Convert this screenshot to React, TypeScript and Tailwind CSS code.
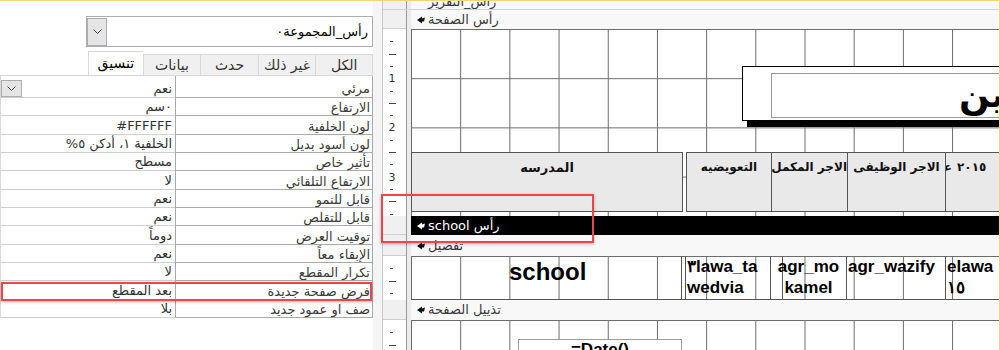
import clsx from 'clsx';

const PROPS: [string, string][] = [
  ['مرئي', 'نعم'],
  ['الارتفاع', '٠سم'],
  ['لون الخلفية', '#FFFFFF'],
  ['لون أسود بديل', 'الخلفية ١، أدكن ٥%'],
  ['تأثير خاص', 'مسطح'],
  ['الارتفاع التلقائي', 'لا'],
  ['قابل للنمو', 'نعم'],
  ['قابل للتقلص', 'نعم'],
  ['توقيت العرض', 'دوماً'],
  ['الإبقاء معاً', 'نعم'],
  ['تكرار المقطع', 'لا'],
  ['فرض صفحة جديدة', 'بعد المقطع'],
  ['صف او عمود جديد', 'بلا'],
];

const TABS = ['الكل', 'غير ذلك', 'حدث', 'بيانات', 'تنسيق'];

function Chevron() {
  return (
    <svg width="9" height="5" viewBox="0 0 9 5">
      <path d="M0.5 0.5 L4.5 4.5 L8.5 0.5" fill="none" stroke="#444" strokeWidth="1" />
    </svg>
  );
}

function SectionArrow({ color }: { color: string }) {
  return (
    <svg width="8" height="8" viewBox="0 0 8 8">
      <path d="M0 4 L5 0.5 L5 2.5 L8 1.5 L7 5.5 L5 5.5 L5 7.5 Z" fill={color} />
    </svg>
  );
}

// ruler ticks every quarter of a centimetre (49.2px)
function Ruler({ count, className }: { count: number; className: string }) {
  const ticks = Array.from({ length: count }, (_, i) => i + 1);
  return (
    <div className={clsx('relative w-[23px] shrink-0 bg-white overflow-hidden', className)}>
      {ticks.map((i) => {
        const top = i * 12.3;
        if (i % 4 === 0)
          return (
            <span
              key={i}
              className="absolute left-[5px] w-[8px] -translate-y-1/2 text-center text-[11px] leading-none text-[#333]"
              style={{ top }}
            >
              {i / 4}
            </span>
          );
        return (
          <span
            key={i}
            className={clsx(
              'absolute h-px bg-[#444]',
              i % 4 === 2 ? 'left-[6px] w-[7px]' : 'left-[7px] w-[3px]'
            )}
            style={{ top }}
          />
        );
      })}
    </div>
  );
}

function Sep() {
  return <div className="w-[5px] shrink-0 border-l border-[#9a9a9a] bg-[#ebebeb]" />;
}

function BarRow({
  className,
  dark,
  children,
}: {
  className: string;
  dark?: boolean;
  children: React.ReactNode;
}) {
  return (
    <div className={clsx('flex shrink-0', className)}>
      <div className="w-[23px] shrink-0 border-b border-[#cfcfcf] bg-[#f0f0f0]" />
      <Sep />
      <div
        className={clsx(
          'flex flex-1 items-center gap-[3px] overflow-hidden pl-[6px] text-[13px]',
          dark ? 'bg-black text-white' : 'bg-[#f8f8f8] text-[#3a3a3a]'
        )}
      >
        <SectionArrow color={dark ? '#fff' : '#111'} />
        <span dir="rtl">{children}</span>
      </div>
    </div>
  );
}

const GRID =
  '[background-image:linear-gradient(to_right,#6b6b6b_1px,transparent_1px),linear-gradient(to_bottom,#6b6b6b_1px,transparent_1px)] [background-size:49.2px_49.2px]';

function PropertySheet() {
  return (
    <div dir="rtl" className="flex h-full w-[373px] shrink-0 flex-col bg-white">
      <div className="h-[15px] shrink-0" />
      {/* object selector */}
      <div className="ml-[86px] flex h-[31px] shrink-0 items-center border border-[#abadb3] bg-white">
        <span className="flex-1 pr-[4px] text-[13px] text-black">رأس_المجموعة٠</span>
        <div className="flex h-[28px] w-[20px] items-center justify-center border border-[#adadad] bg-[#e5e5e5]">
          <Chevron />
        </div>
      </div>
      {/* tabs */}
      <div className="mt-[4px] ml-[88px] flex h-[24px] shrink-0 items-end">
        {TABS.map((t, i) => {
          const active = i === TABS.length - 1;
          return (
            <div
              key={t}
              className={clsx(
                'flex items-center justify-center border-l border-[#d9d9d9] text-[14px]',
                i === 0 && 'border-r',
                active
                  ? 'h-[24px] w-[55px] border-t bg-white text-black'
                  : 'h-[21px] w-[58px] border-t bg-[#f0f0f0] text-[#333]',
                i === 0 && 'w-[56px]'
              )}
            >
              {t}
            </div>
          );
        })}
      </div>
      {/* property grid */}
      <div className="flex shrink-0 flex-col border-t border-l border-[#d9d9d9]">
        {PROPS.map(([label, value], i) => (
          <div key={label} className={clsx('flex', i === 0 ? 'h-[22px]' : 'h-[18.33px]')}>
            <div
              className={clsx(
                'flex w-[198px] shrink-0 items-end border-r border-b border-l border-[#a9a9a9] pr-[2px] pb-[1px] text-[13px] leading-none text-[#3c3c3c]',
                i === 0 && 'pb-[2px]'
              )}
            >
              {label}
            </div>
            <div className="flex flex-1 items-end border-b border-[#cfcfcf] pr-[3px] pb-[1px] text-[13px] leading-none text-[#333]">
              <span className="flex-1 pb-px">
                <bdi>{value}</bdi>
              </span>
              {i === 0 && (
                <div className="mb-[-1px] flex h-[17px] w-[21px] items-center justify-center border border-[#adadad] bg-[#e5e5e5]">
                  <Chevron />
                </div>
              )}
            </div>
          </div>
        ))}
      </div>
    </div>
  );
}

function HeaderLabel({ className, children }: { className: string; children?: React.ReactNode }) {
  return (
    <div
      dir="rtl"
      className={clsx(
        'absolute top-[123px] h-[60px] overflow-hidden border border-[#555] bg-[#e9e9e9] pt-[5px] text-center text-[12px] font-bold whitespace-nowrap text-[#111]',
        className
      )}
    >
      {children}
    </div>
  );
}

function Field({ className, children }: { className: string; children: React.ReactNode }) {
  return (
    <div
      className={clsx(
        "absolute top-0 h-[44px] overflow-hidden border-x border-[#555] font-['Liberation_Sans',Arial,sans-serif] text-[17px] leading-[21px] font-bold text-black",
        className
      )}
    >
      {children}
    </div>
  );
}

function Designer() {
  return (
    <div className="flex h-full flex-1 flex-col overflow-hidden">
      {/* report header bar, mostly scrolled away */}
      <div className="flex h-[8px] shrink-0">
        <div className="w-[23px] shrink-0 bg-[#f0f0f0]" />
        <Sep />
        <div className="flex-1 overflow-hidden bg-[#f8f8f8] pl-[17px] text-[13px] leading-[8px] text-[#3a3a3a]">
          <span dir="rtl" className="relative top-[-3px]">
            رأس_التقرير
          </span>
        </div>
      </div>
      <BarRow className="h-[20px] border-t border-[#d4d4d4]">رأس الصفحة</BarRow>

      {/* page header */}
      <div className="flex h-[187px] shrink-0">
        <Ruler count={15} className="h-[187px]" />
        <Sep />
        <div className={clsx('relative flex-1 overflow-hidden bg-white', GRID)}>
          <div className="absolute top-[37px] left-[331px] h-[55px] w-[320px] border border-black bg-white shadow-[5px_6px_0_#000]" />
          <div className="absolute top-[44px] left-[360px] h-[45px] w-[300px] border border-[#9a9a9a] bg-white" />
          <span
            dir="rtl"
            className="absolute top-[44px] left-[548px] text-[36px] leading-[44px] font-bold whitespace-nowrap text-black"
          >
            كشف العاملين
          </span>
          <HeaderLabel className="left-0 w-[272px] text-[13px]">المدرسه</HeaderLabel>
          <HeaderLabel className="left-[275px] w-[86px]">التعويضيه</HeaderLabel>
          <HeaderLabel className="left-[360px] w-[77px]">الاجر المكمل</HeaderLabel>
          <HeaderLabel className="left-[436px] w-[99px]">الاجر الوظيفى</HeaderLabel>
          <HeaderLabel className="left-[534px] w-[100px]">
            <span className="absolute top-[5px] right-[92px]">علاوة</span>
            <span className="absolute top-[5px] left-[11px]">٢٠١٥</span>
          </HeaderLabel>
        </div>
      </div>

      <BarRow className="h-[19px]" dark>
        رأس school
      </BarRow>
      <BarRow className="h-[21px]">تفصيل</BarRow>

      {/* detail */}
      <div className="flex h-[44px] shrink-0">
        <Ruler count={3} className="h-[44px]" />
        <Sep />
        <div className={clsx('relative flex-1 overflow-hidden bg-white', GRID)}>
          <span className="absolute top-[2px] left-[98px] font-['Liberation_Sans',Arial,sans-serif] text-[24px] leading-[28px] font-bold text-black">
            school
          </span>
          <div className="absolute top-0 left-[270px] h-[44px] w-px bg-[#555]" />
          <Field className="left-[274px] w-[98px] pl-[1px] text-left">
            ٣lawa_ta
            <br />
            wedvia
          </Field>
          <Field className="left-[359px] w-[77px] text-center">
            agr_mo
            <br />
            kamel
          </Field>
          <Field className="left-[435px] w-[100px] pl-px text-left">agr_wazify</Field>
          <Field className="left-[534px] w-[80px] pl-px text-left">
            elawa
            <br />
            ١٥
          </Field>
          <div className="absolute bottom-0 left-0 h-px w-full bg-[#555]" />
        </div>
      </div>

      <BarRow className="h-[20px]">تذييل الصفحة</BarRow>

      {/* page footer */}
      <div className="flex h-[40px] shrink-0">
        <Ruler count={3} className="h-[40px]" />
        <Sep />
        <div className={clsx('relative flex-1 overflow-hidden bg-white', GRID)}>
          <div className="absolute top-[19px] left-[107px] h-[30px] w-[164px] border border-[#9a9a9a] bg-white text-center font-['Liberation_Sans',Arial,sans-serif] text-[17px] leading-[20px] font-bold text-black">
            =Date()
          </div>
        </div>
      </div>
    </div>
  );
}

export default function App() {
  return (
    <div className="relative flex h-[350px] w-[1000px] overflow-hidden border-t border-r border-[#f2d675] bg-white font-['DejaVu_Sans',sans-serif]">
      <PropertySheet />
      <div className="w-[10px] shrink-0 border-r border-[#c8c8c8] bg-[#f5f5f5]" />
      <Designer />

      {/* highlight boxes */}
      <div className="pointer-events-none absolute top-[281px] left-px h-[19px] w-[371px] border-2 border-[#e8474c] shadow-[0_1px_3px_rgba(0,0,0,0.3)]" />
      <div className="pointer-events-none absolute top-[193px] left-[381px] h-[49px] w-[213px] border-2 border-[#e8474c] shadow-[0_1px_3px_rgba(0,0,0,0.3)]" />
    </div>
  );
}
